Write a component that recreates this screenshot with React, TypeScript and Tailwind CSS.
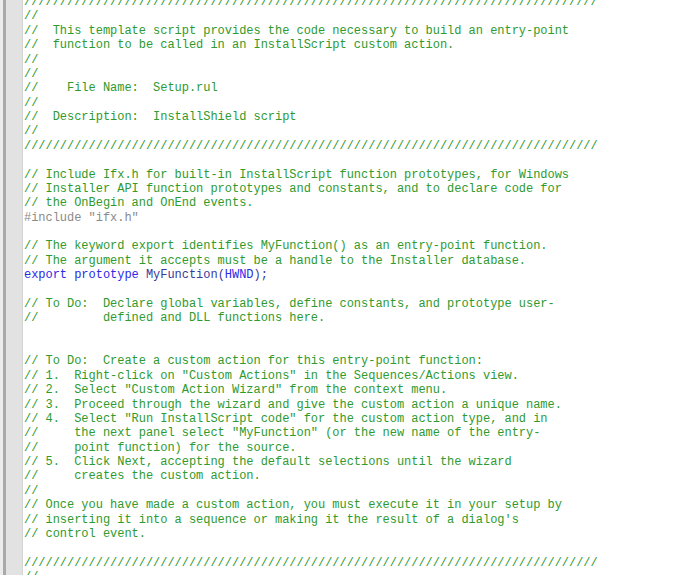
import React from "react";

const SL = "/".repeat(80);

type Seg = { t: string; c?: string };

const G = "text-[#2f9a2f]";
const K = "text-[#2a2ae8]";
const F = "text-[#3a3a9a]";
const P = "text-[#8a8a8a]";

const lines: Seg[][] = [
  [{ t: SL, c: G }],
  [{ t: "//", c: G }],
  [{ t: "//  This template script provides the code necessary to build an entry-point", c: G }],
  [{ t: "//  function to be called in an InstallScript custom action.", c: G }],
  [{ t: "//", c: G }],
  [{ t: "//", c: G }],
  [{ t: "//    File Name:  Setup.rul", c: G }],
  [{ t: "//", c: G }],
  [{ t: "//  Description:  InstallShield script", c: G }],
  [{ t: "//", c: G }],
  [{ t: SL, c: G }],
  [],
  [{ t: "// Include Ifx.h for built-in InstallScript function prototypes, for Windows", c: G }],
  [{ t: "// Installer API function prototypes and constants, and to declare code for", c: G }],
  [{ t: "// the OnBegin and OnEnd events.", c: G }],
  [{ t: '#include "ifx.h"', c: P }],
  [],
  [{ t: "// The keyword export identifies MyFunction() as an entry-point function.", c: G }],
  [{ t: "// The argument it accepts must be a handle to the Installer database.", c: G }],
  [
    { t: "export", c: K },
    { t: " " },
    { t: "prototype", c: K },
    { t: " " },
    { t: "MyFunction(", c: F },
    { t: "HWND", c: K },
    { t: ");", c: F },
  ],
  [],
  [{ t: "// To Do:  Declare global variables, define constants, and prototype user-", c: G }],
  [{ t: "//         defined and DLL functions here.", c: G }],
  [],
  [],
  [{ t: "// To Do:  Create a custom action for this entry-point function:", c: G }],
  [{ t: '// 1.  Right-click on "Custom Actions" in the Sequences/Actions view.', c: G }],
  [{ t: '// 2.  Select "Custom Action Wizard" from the context menu.', c: G }],
  [{ t: "// 3.  Proceed through the wizard and give the custom action a unique name.", c: G }],
  [{ t: '// 4.  Select "Run InstallScript code" for the custom action type, and in', c: G }],
  [{ t: '//     the next panel select "MyFunction" (or the new name of the entry-', c: G }],
  [{ t: "//     point function) for the source.", c: G }],
  [{ t: "// 5.  Click Next, accepting the default selections until the wizard", c: G }],
  [{ t: "//     creates the custom action.", c: G }],
  [{ t: "//", c: G }],
  [{ t: "// Once you have made a custom action, you must execute it in your setup by", c: G }],
  [{ t: "// inserting it into a sequence or making it the result of a dialog's", c: G }],
  [{ t: "// control event.", c: G }],
  [],
  [{ t: SL, c: G }],
  [{ t: "//", c: G }],
];

export default function App() {
  return (
    <div className="w-[680px] h-[575px] overflow-hidden bg-white flex">
      <div className="flex shrink-0 h-full">
        <div className="w-[3px] bg-[#ececec]" />
        <div className="w-[3px] bg-[#a9a9a9]" />
        <div className="w-[16px] bg-[#e2e2e2]" />
        <div className="w-[1px] bg-[#d4d4d4]" />
      </div>
      <div
        className="flex-1 pl-[1px] mt-[-5px] text-[12px] leading-[14.38px] tracking-[-0.03px]"
        style={{ fontFamily: '"Liberation Mono", monospace' }}
      >
        {lines.map((segs, i) => (
          <div key={i} className="whitespace-pre h-[14.38px]">
            {segs.length === 0
              ? " "
              : segs.map((s, j) => (
                  <span key={j} className={s.c}>
                    {s.t}
                  </span>
                ))}
          </div>
        ))}
      </div>
    </div>
  );
}
